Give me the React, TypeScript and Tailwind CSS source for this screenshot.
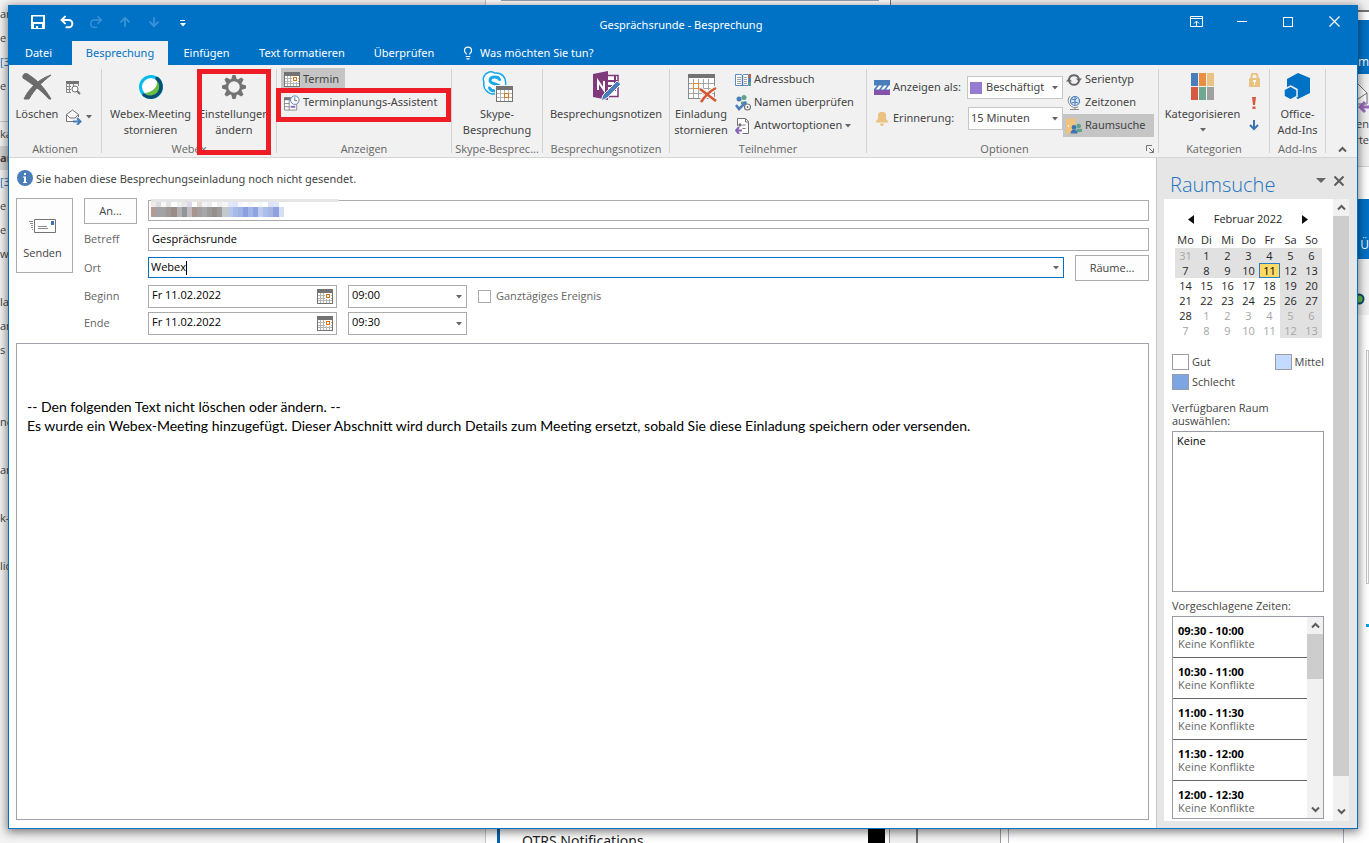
import React, { useState } from 'react';
import { Undo2, Redo2, ArrowUp, ArrowDown, Lightbulb } from 'lucide-react';

// ---------- Icons ----------

const Caret = ({ className = 'text-[#666666]' }: { className?: string }) => (
  <svg width="6" height="4" viewBox="0 0 6 4" className={`pointer-events-none shrink-0 ${className}`} aria-hidden="true">
    <path d="M0 0h6L3 3.5z" fill="currentColor" />
  </svg>
);

const Chevron = ({ up = false }: { up?: boolean }) => (
  <svg width="9" height="7" viewBox="0 0 9 7" aria-hidden="true">
    <path d={up ? 'M1 5.5l3.5-3.5L8 5.5' : 'M1 1.5L4.500 5 8 1.500'} fill="none" stroke="#5c5c5c" strokeWidth="2" />
  </svg>
);

const SaveIcon = () => (
  <svg width="14" height="14" viewBox="0 0 14 14" aria-hidden="true">
    <path d="M0 0h14v14H0zM2 1.500V7h10V1.500zM3 9v4h2v-2h2v2h4V9z" fill="#fff" fillRule="evenodd" />
  </svg>
);

const CalendarIcon = () => (
  <svg width="16" height="15" viewBox="0 0 16 15" shapeRendering="crispEdges" className="shrink-0" aria-hidden="true">
    <path d="M0 0h16v15H0z" fill="#737373" />
    <path d="M1 4h14v10H1z" fill="#fff" />
    <path d="M3.500 4v10M6.500 4v10M9.500 4v10M12.500 4v10M1 6.500h14M1 9.500h14M1 11.500h14" stroke="#b4b4b4" />
    <path d="M8 4h6v6H8z" fill="#fff" />
    <path d="M9 5h4v4H9z" fill="#e0730c" />
    <path d="M10 6h2v2h-2z" fill="#fff" />
  </svg>
);

const DeleteIcon = () => (
  <svg width="32" height="32" viewBox="0 0 32 32" aria-hidden="true">
    <path d="M2 7C1 3 5 1 8 4c8 5 15 12 22 24h-2C20 19 11 13 2 7z" fill="#6b6b6b" stroke="#6b6b6b" />
    <path d="M30 4C21 11 13 19 8 28H3C8 17 18 8 30 4z" fill="#6b6b6b" stroke="#6b6b6b" />
  </svg>
);

const CalendarSearchIcon = () => (
  <svg width="16" height="16" viewBox="0 0 16 16" aria-hidden="true">
    <path d="M1 2h13v3H1z" fill="#737373" />
    <path d="M1.500 4v9.500H6M1 7.500h5M1 10.500h5M4.500 5v8M8.500 5v2M13.500 4v3" fill="none" stroke="#8a8a8a" />
    <circle cx="10" cy="10" r="3" fill="#fff" stroke="#737373" />
    <path d="M12 12l3 3" stroke="#737373" strokeWidth="2" />
  </svg>
);

const ForwardIcon = () => (
  <svg width="17" height="16" viewBox="0 0 17 16" aria-hidden="true">
    <path d="M1.500 5.500L7.500 1l6 4.500V8M1.500 5.500v7H8M1.500 5.500L5 9h5l3.500-3.500" fill="#fff" stroke="#737373" />
    <path d="M8 12.500h7M12 9l3.500 3.500L12 16" fill="none" stroke="#4a7ebb" strokeWidth="2" />
  </svg>
);

const WebexIcon = () => (
  <svg width="26" height="26" viewBox="0 0 26 26" aria-hidden="true">
    <circle cx="13" cy="13" r="9" fill="#fff" />
    <path d="M19 6c1 7-4 12-12 13 3 4 9 4 12 1 4-4 4-10 0-14z" fill="#69bd45" />
    <circle cx="13" cy="13" r="10.500" fill="none" stroke="#07bcea" strokeWidth="3" />
    <path d="M19 4.500A10.500 10.500 0 1 1 6 21" fill="none" stroke="#075071" strokeWidth="3.500" strokeLinecap="round" />
  </svg>
);

const GearIcon = () => (
  <svg width="26" height="26" viewBox="-13 -13 26 26" aria-hidden="true">
    <g fill="#737373">
      {[0, 45, 90, 135, 180, 225, 270, 315].map((angle) => (
        <path key={angle} d="M-3-7L-1.500-12h3L3-7z" transform={`rotate(${angle})`} />
      ))}
    </g>
    <circle r="7" fill="#f1f1f1" stroke="#737373" strokeWidth="2.500" />
  </svg>
);

const AssistantIcon = () => (
  <svg width="17" height="16" viewBox="0 0 17 16" aria-hidden="true">
    <path d="M.500 2.500h13v13H.500z" fill="#fff" stroke="#8a8a8a" />
    <path d="M0 2h7v3H0z" fill="#737373" />
    <path d="M5.500 4v12M0 8.500h6M0 12h6" stroke="#8a8a8a" />
    <path d="M7 11h5v2H7z" fill="#8764b8" />
    <circle cx="11.500" cy="5" r="4.500" fill="#fff" stroke="#4a7ebb" />
    <path d="M11.500 2v3.500H14" fill="none" stroke="#666" />
  </svg>
);

const SkypeIcon = () => (
  <svg width="32" height="32" viewBox="0 0 32 32" aria-hidden="true">
    <path d="M7 1.500c2-1 5-.500 6.500.500C21 1 25.500 7 24.500 13c2 4 2 8-1 10-2 2-6 2-8 0C7 24 1.500 18 3 11c-2-4 .500-8 4-9.500z" fill="#fff" stroke="#16a9ea" strokeWidth="1.500" />
    <path d="M18.500 8.500C17 5 9 5 9 9.500s10 2.500 10 7S10 21 8.500 17" fill="none" stroke="#16a9ea" strokeWidth="3" strokeLinecap="round" />
    <path d="M14 14h18v17H14z" fill="#f1f1f1" />
    <g shapeRendering="crispEdges">
      <path d="M15.500 15.500h16v15h-16z" fill="#fff" stroke="#737373" />
      <path d="M15 15h17v4H15z" fill="#737373" />
      <path d="M19.500 19v11M23.500 19v11M27.500 19v11M16 22.500h15M16 26.500h15" stroke="#b4b4b4" />
      <path d="M23.500 22.500h4v4h-4z" fill="#fff" stroke="#e0730c" />
    </g>
  </svg>
);

const NotesIcon = () => (
  <svg width="32" height="32" viewBox="0 0 32 32" aria-hidden="true">
    <path d="M17 4.500h11v21H17" fill="#fff" stroke="#80397b" strokeWidth="1.500" />
    <path d="M18 10h6M18 15h6M25 5v15M25 10h3M25 15h3" stroke="#80397b" strokeWidth="2" />
    <path d="M3 3l15-3v29L3 26z" fill="#80397b" />
    <path d="M8 19V10l6 9v-9" fill="none" stroke="#fff" strokeWidth="2" />
    <path d="M27 10l4 3-14 14-6 3 2-6z" fill="#4a7ebb" stroke="#f1f1f1" strokeWidth="1" />
  </svg>
);

const CancelInviteIcon = () => (
  <svg width="32" height="32" viewBox="0 0 32 32" aria-hidden="true">
    <g shapeRendering="crispEdges">
      <path d="M3.500 3.500h26v24h-26z" fill="#fff" stroke="#8a8a8a" />
      <path d="M8.500 8v19M13.500 8v19M18.500 8v19M23.500 8v19M4 12.500h25M4 17.500h25M4 22.500h25" stroke="#a5a5a5" />
      <path d="M3 3h27v4H3z" fill="#737373" />
      <path d="M8.500 12.500h5v5h-5z" fill="#fff" stroke="#e8893a" />
    </g>
    <path d="M15 18l16 12M31 17C25 20 20 25 16 31" stroke="#f1f1f1" strokeWidth="5" fill="none" />
    <path d="M15 18l16 12M31 17C25 20 20 25 16 31" stroke="#d65532" strokeWidth="2.500" fill="none" />
  </svg>
);

const AddressBookIcon = () => (
  <svg width="16" height="14" viewBox="0 0 16 14" aria-hidden="true">
    <path d="M.500 1.500h6L7.500 2.500l1-1h5v11H.500z" fill="#fff" stroke="#5b8bc0" />
    <path d="M7.500 2v11" stroke="#4a7ebb" strokeWidth="1.500" />
    <path d="M2 4.500h4M2 6.500h4M2 8.500h4M2 10.500h4M9 4.500h3M9 6.500h3M9 8.500h3M9 10.500h3" stroke="#a0a0a0" />
    <path d="M14 1h2v4h-2z" fill="#d65532" />
    <path d="M14 5h2v4h-2z" fill="#4a7ebb" />
    <path d="M14 9h2v4h-2z" fill="#5fa187" />
  </svg>
);

const CheckNamesIcon = () => (
  <svg width="16" height="16" viewBox="0 0 16 16" aria-hidden="true">
    <circle cx="4" cy="4" r="2.500" fill="#4a7ebb" />
    <circle cx="9" cy="2.500" r="2.500" fill="#5fa187" />
    <path d="M6 9V6.500h5.500V9z" fill="#5fa187" />
    <path d="M1 10l3 4 7-7" fill="none" stroke="#4a7ebb" strokeWidth="2.500" />
    <circle cx="12.500" cy="12" r="3" fill="#fff" stroke="#737373" strokeWidth="1.200" />
    <circle cx="12.500" cy="12" r="1" fill="#737373" />
  </svg>
);

const ResponseIcon = () => (
  <svg width="16" height="16" viewBox="0 0 16 16" aria-hidden="true">
    <path d="M2.500 8V.500h8l3 3v12h-6" fill="#fff" stroke="#737373" />
    <path d="M10.500 1v3h3" fill="none" stroke="#737373" />
    <path d="M4 6h2v2H4zM7.500 7h3M7.500 10.500h3" stroke="#737373" fill="#737373" strokeWidth="1" />
    <path d="M1 12.500h6M4 9l-3 3.500L4 16" fill="none" stroke="#8764b8" strokeWidth="2" />
  </svg>
);

const ShowAsIcon = () => (
  <svg width="16" height="15" viewBox="0 0 16 15" className="shrink-0" aria-hidden="true">
    <path d="M0 0h16v10H0z" fill="#4a7ebb" />
    <path d="M0 5.500h3L0 9zM5 5.500h3L5 9.500H2zM10 5.500h3L10 9.500H7zM15 5.500h1v3l-1 1h-3z" fill="#fff" />
    <path d="M0 10h16v5H0z" fill="#8651a8" />
  </svg>
);

const BellIcon = () => (
  <svg width="14" height="14" viewBox="0 0 14 14" className="shrink-0" aria-hidden="true">
    <path d="M5 0h4l2 2v5l2 2v1.500H1V9l2-2V2zM5 11.500h4L8 14H6z" fill="#eac282" />
  </svg>
);

const RecurrenceIcon = () => (
  <svg width="16" height="14" viewBox="0 0 16 14" aria-hidden="true">
    <path d="M3 6A5.200 5.200 0 0 1 13 6M13 8A5.200 5.200 0 0 1 3 8" fill="none" stroke="#666" strokeWidth="1.800" />
    <path d="M10 5.500h6L13 9zM0 8.500h6L3 5z" fill="#666" />
  </svg>
);

const GlobeIcon = () => (
  <svg width="14" height="16" viewBox="0 0 14 16" aria-hidden="true">
    <circle cx="8" cy="6" r="4.500" fill="#d7e5f5" stroke="#4a7ebb" strokeWidth="1.200" />
    <path d="M5 4l3 1 2-2M5 8l3-1 3 1M8 2v8" stroke="#4a7ebb" fill="none" />
    <path d="M3 1a7 7 0 0 0 8 11M8 12v3M3 14.500h9" fill="none" stroke="#8a8a8a" />
  </svg>
);

const RoomFinderIcon = () => (
  <svg width="17" height="16" viewBox="0 0 17 16" aria-hidden="true">
    <path d="M0 0h10v16H0z" fill="#f0c27b" />
    <path d="M2 7h1v2H2z" fill="#fff" />
    <circle cx="13.500" cy="8" r="2.500" fill="#5fa187" />
    <path d="M11 15v-4h6v3z" fill="#5fa187" />
    <circle cx="8.500" cy="9.500" r="2.500" fill="#3b73b5" />
    <path d="M5 16v-2l2-2h3l2 2v2z" fill="#3b73b5" />
  </svg>
);

const CategorizeIcon = () => (
  <svg width="24" height="28" viewBox="0 0 24 28" aria-hidden="true">
    <path d="M0 0h7v13H0z" fill="#4a7ebb" />
    <path d="M8 0h7v13H8z" fill="#ea8f42" />
    <path d="M16 0h7v13h-7z" fill="#eac282" />
    <path d="M0 14h7v13H0z" fill="#d65a42" />
    <path d="M8 14h7v13H8z" fill="#6fa891" />
    <path d="M16 14h7v13h-7z" fill="#a0a0a0" />
  </svg>
);

const LockIcon = () => (
  <svg width="11" height="14" viewBox="0 0 11 14" aria-hidden="true">
    <path d="M2.500 6V3.500a3 3 0 0 1 6 0V6" fill="none" stroke="#eac282" strokeWidth="2" />
    <path d="M0 5h11v9H0z" fill="#eac282" />
    <path d="M4 7h3v2H6v3H5V9H4z" fill="#fff" />
  </svg>
);

const ImportantIcon = () => (
  <svg width="4" height="12" viewBox="0 0 4 12" aria-hidden="true">
    <path d="M0 0h4L3 8H1zM.500 9.500h3V12h-3z" fill="#d65a42" />
  </svg>
);

const LowIcon = () => (
  <svg width="10" height="11" viewBox="0 0 10 11" aria-hidden="true">
    <path d="M5 0v9M1 5l4 4 4-4" fill="none" stroke="#3b73b5" strokeWidth="2" />
  </svg>
);

const AddInsIcon = () => (
  <svg width="28" height="28" viewBox="0 0 28 28" aria-hidden="true">
    <path d="M14 0l12 5v15l-12 6L3 20V6z" fill="#0072c6" />
    <path d="M6.500 13l6.500 3.500v7L6.500 27 0 23.500v-7z" fill="#0072c6" stroke="#f1f1f1" strokeWidth="1.500" />
  </svg>
);

const InfoIcon = () => (
  <svg width="16" height="16" viewBox="0 0 16 16" aria-hidden="true">
    <circle cx="8" cy="8" r="8" fill="#4a7ebb" />
    <path d="M7 3h2v2H7zM6 6.500h3V12h1v1H6v-1h1V7.500H6z" fill="#fff" />
  </svg>
);

const SendIcon = () => (
  <svg width="28" height="15" viewBox="0 0 28 15" aria-hidden="true">
    <path d="M5.500.500h21v13h-21z" fill="#fff" stroke="#737373" />
    <path d="M22 2h3v4h-3z" fill="#3b73b5" />
    <path d="M9 7.500h9M9 9.500h10M0 2.500h4M1 4.500h3M2 6.500h2M2 8.500h2M3 10.500h1" stroke="#8a8a8a" />
  </svg>
);

// ---------- Data ----------

const tabs = [
  { name: 'Datei', width: 'w-[63px] pr-1' },
  { name: 'Besprechung', width: 'w-24' },
  { name: 'Einfügen', width: 'w-[77px]' },
  { name: 'Text formatieren', width: 'w-[114px]' },
  { name: 'Überprüfen', width: 'w-[90px]' },
];

const weekdays = ['Mo', 'Di', 'Mi', 'Do', 'Fr', 'Sa', 'So'];

const weeks = [
  [31, 1, 2, 3, 4, 5, 6],
  [7, 8, 9, 10, 11, 12, 13],
  [14, 15, 16, 17, 18, 19, 20],
  [21, 22, 23, 24, 25, 26, 27],
  [28, 1, 2, 3, 4, 5, 6],
  [7, 8, 9, 10, 11, 12, 13],
];

const suggestions = ['09:30 - 10:00', '10:30 - 11:00', '11:00 - 11:30', '11:30 - 12:00', '12:00 - 12:30'];

// Colour blocks over the hidden recipient
const maskTop = ['#f3e9e6', '#d9dde2', '#f7f7f7', '#e3e3e3', '#ffffff', '#f0f0f0', '#e8e8e8', '#ddd8ea', '#ffffff', '#e5dcd8', '#f4f4f4', '#ececec', '#ffffff', '#eeeeee', '#f5f5f5', '#e2e8f8', '#dde5fa', '#f5f8ff', '#ffffff', '#f5f8ff', '#ffffff', '#f5f8ff', '#ffffff', '#dde2f8', '#dde5fa', '#ffffff'];
const maskBottom = ['#b59a95', '#8f9496', '#a2a3a2', '#8d8785', '#9b8c88', '#a3a3a5', '#8f979c', '#b7aeb4', '#a8958f', '#938e8e', '#a5a7ab', '#8a8a8a', '#96908d', '#8c8a8b', '#c3c9c8', '#adbce5', '#a6bbe9', '#90a6de', '#8aa0de', '#91a8e4', '#8fa3df', '#b3c2ec', '#a9c0ee', '#98a8df', '#8ea3de', '#ccd9f5'];

// One entry per 24px line of the mail list
const mailFragments = ['ar', 'e', '[3', 'e', '', 'ka', 'ar', '[3', 'e', 'e', 'we', '', 'la', 'ar', 's', '', '', 'ne', '', 'ar', '', 'k-', '', 'lic'];

// ---------- Ribbon parts ----------

const Divider = () => <div className="my-1 w-px shrink-0 bg-[#d2d2d2]" />;

const Group = ({ label, width, labelClass = '', children }: { label: string; width: string; labelClass?: string; children: React.ReactNode }) => (
  <section aria-label={label} className={`relative flex shrink-0 flex-col ${width}`}>
    <div className="flex flex-1">{children}</div>
    <div className={`h-4 text-center font-['Open_Sans',sans-serif] leading-4 whitespace-nowrap text-[#666666] ${labelClass}`}>{label}</div>
  </section>
);

const BigButton = ({ icon, width, children }: { icon: React.ReactNode; width: string; children: React.ReactNode }) => (
  <button className={`flex shrink-0 flex-col items-center pt-1.5 leading-4 whitespace-nowrap ${width}`}>
    <span className="mb-[3px] flex h-8 items-center justify-center">{icon}</span>
    {children}
  </button>
);

const SmallButton = ({ icon, active = false, children }: { icon: React.ReactNode; active?: boolean; children: React.ReactNode }) => (
  <button className={`flex h-[23px] items-center gap-[3px] pr-1.5 pl-[3px] whitespace-nowrap ${active ? 'bg-[#c5c5c5]' : ''}`}>
    <span className="flex w-4 shrink-0 justify-center">{icon}</span>
    {children}
  </button>
);

const Ribbon = () => (
  <div className="flex h-[93px] shrink-0 overflow-hidden border-b border-[#d5d5d5] bg-[#f1f1f1] font-['Noto_Sans',sans-serif] text-[11px] text-[#444444]">
    <Group label="Aktionen" width="w-[92px]">
      <BigButton icon={<DeleteIcon />} width="w-14">
        <span>Löschen</span>
      </BigButton>
      <div className="flex flex-col gap-3.5 pt-3.5">
        <button aria-label="Kalender durchsuchen"><CalendarSearchIcon /></button>
        <button aria-label="Weiterleiten" className="flex items-center gap-1"><ForwardIcon /><Caret /></button>
      </div>
    </Group>
    <Divider />
    <Group label="Webex" width="w-[174px]">
      <BigButton icon={<WebexIcon />} width="w-[97px]">
        <span>Webex-Meeting</span>
        <span>stornieren</span>
      </BigButton>
      <BigButton icon={<GearIcon />} width="w-[70px]">
        <span>Einstellungen</span>
        <span>ändern</span>
      </BigButton>
      <div className="pointer-events-none absolute top-1 right-[5px] h-[86px] w-[74px] border-5 border-[#ee1c25]" />
    </Group>
    <Divider />
    <Group label="Anzeigen" width="w-[174px]">
      <div className="flex flex-col items-start pt-[3px] pl-1">
        <SmallButton active icon={<CalendarIcon />}>Termin</SmallButton>
        <SmallButton icon={<AssistantIcon />}>Terminplanungs-Assistent</SmallButton>
      </div>
      <div className="pointer-events-none absolute top-[23px] right-0 -left-px h-[34px] border-5 border-[#ee1c25]" />
    </Group>
    <Divider />
    <Group label="Skype-Besprec..." width="w-[90px]">
      <BigButton icon={<SkypeIcon />} width="w-full">
        <span>Skype-</span>
        <span>Besprechung</span>
      </BigButton>
    </Group>
    <Divider />
    <Group label="Besprechungsnotizen" width="w-[126px]">
      <BigButton icon={<NotesIcon />} width="w-full">
        <span>Besprechungsnotizen</span>
      </BigButton>
    </Group>
    <Divider />
    <Group label="Teilnehmer" width="w-[196px]">
      <BigButton icon={<CancelInviteIcon />} width="w-[62px]">
        <span>Einladung</span>
        <span>stornieren</span>
      </BigButton>
      <div className="flex flex-col items-start pt-[3px]">
        <SmallButton icon={<AddressBookIcon />}>Adressbuch</SmallButton>
        <SmallButton icon={<CheckNamesIcon />}>Namen überprüfen</SmallButton>
        <SmallButton icon={<ResponseIcon />}>Antwortoptionen <Caret /></SmallButton>
      </div>
    </Group>
    <Divider />
    <Group label="Optionen" width="w-[291px]" labelClass="pr-4">
      <div className="flex w-[196px] flex-col gap-2 pt-[11px] pl-[7px]">
        <div className="flex h-[23px] items-center">
          <label htmlFor="showAs" className="flex flex-1 items-center gap-[3px] whitespace-nowrap"><ShowAsIcon />Anzeigen als:</label>
          <div className="relative flex h-full w-24 items-center border border-[#c6c6c6] bg-white">
            <span className="ml-0.5 h-3 w-3 shrink-0 bg-[#967bd2]" />
            <select id="showAs" className="min-w-0 flex-1 appearance-none pl-1 outline-none">
              <option>Beschäftigt</option>
              <option>Frei</option>
            </select>
            <span className="pointer-events-none absolute right-1"><Caret /></span>
          </div>
        </div>
        <div className="flex h-[23px] items-center">
          <label htmlFor="reminder" className="flex flex-1 items-center gap-1 pl-px whitespace-nowrap"><BellIcon />Erinnerung:</label>
          <div className="relative flex h-full w-[95px] items-center border border-[#c6c6c6] bg-white">
            <select id="reminder" className="min-w-0 flex-1 appearance-none pl-0.5 outline-none">
              <option>15 Minuten</option>
              <option>30 Minuten</option>
            </select>
            <span className="pointer-events-none absolute right-1"><Caret /></span>
          </div>
        </div>
      </div>
      <div className="flex w-[91px] flex-col pt-[3px]">
        <SmallButton icon={<RecurrenceIcon />}>Serientyp</SmallButton>
        <SmallButton icon={<GlobeIcon />}>Zeitzonen</SmallButton>
        <SmallButton active icon={<RoomFinderIcon />}>Raumsuche</SmallButton>
      </div>
      <button aria-label="Weitere Optionen" className="absolute right-1 bottom-1">
        <svg width="8" height="8" viewBox="0 0 8 8" aria-hidden="true">
          <path d="M.500 6V.500H6M3 3l4 4M7.500 3.500v4h-4" fill="none" stroke="#737373" />
        </svg>
      </button>
    </Group>
    <Divider />
    <Group label="Kategorien" width="w-[110px]">
      <BigButton icon={<CategorizeIcon />} width="w-[87px]">
        <span>Kategorisieren</span>
        <span className="flex h-4 items-center"><Caret /></span>
      </BigButton>
      <div className="flex w-4 flex-col items-center pt-[3px]">
        <button aria-label="Privat" className="flex h-[23px] items-center"><LockIcon /></button>
        <button aria-label="Wichtigkeit: hoch" className="flex h-[23px] items-center"><ImportantIcon /></button>
        <button aria-label="Wichtigkeit: niedrig" className="flex h-[23px] items-center"><LowIcon /></button>
      </div>
    </Group>
    <Divider />
    <Group label="Add-Ins" width="w-[55px]">
      <BigButton icon={<AddInsIcon />} width="w-full">
        <span>Office-</span>
        <span>Add-Ins</span>
      </BigButton>
    </Group>
    <Divider />
    <button aria-label="Menüband reduzieren" className="ml-auto self-end pr-2.5 pb-1"><Chevron up /></button>
  </div>
);

// ---------- Title bar ----------

const TitleBar = () => {
  const [activeTab, setActiveTab] = useState('Besprechung');
  return (
    <header className="shrink-0 bg-[#0072c6] font-['Noto_Sans',sans-serif] text-[11px] text-white">
      <div className="grid h-[35px] grid-cols-[1fr_auto_1fr]">
        <div className="flex h-[31px] items-center pl-3.5">
          <button aria-label="Speichern" className="flex w-[29px] justify-center"><SaveIcon /></button>
          <button aria-label="Rückgängig" className="flex w-[29px] justify-center"><Undo2 size={16} strokeWidth={3} /></button>
          <button aria-label="Wiederholen" className="flex w-[29px] justify-center text-[#3d94d6]"><Redo2 size={16} strokeWidth={2} /></button>
          <button aria-label="Vorheriges Element" className="flex w-[29px] justify-center text-[#3d94d6]"><ArrowUp size={14} strokeWidth={3} /></button>
          <button aria-label="Nächstes Element" className="flex w-[29px] justify-center text-[#3d94d6]"><ArrowDown size={14} strokeWidth={3} /></button>
          <button aria-label="Symbolleiste anpassen" className="flex w-[29px] flex-col items-center gap-0.5 pt-1">
            <span className="h-px w-[5px] bg-white" />
            <Caret className="text-white" />
          </button>
        </div>
        <h1 className="self-center pt-1 pr-1">Gesprächsrunde - Besprechung</h1>
        <div className="flex h-[31px] items-center justify-end">
          <button aria-label="Menüband-Anzeigeoptionen" className="flex w-[46px] justify-center">
            <svg width="13" height="11" viewBox="0 0 13 11" aria-hidden="true">
              <path d="M.500.500h12v10H.500zM0 2.500h13M6.500 10V5M4 7.500L6.500 5 9 7.500" fill="none" stroke="#fff" />
            </svg>
          </button>
          <button aria-label="Minimieren" className="flex w-[46px] justify-center"><span className="h-px w-2.5 bg-white" /></button>
          <button aria-label="Maximieren" className="flex w-[46px] justify-center"><span className="h-2.5 w-2.5 border border-white" /></button>
          <button aria-label="Schließen" className="flex w-[46px] justify-center">
            <svg width="11" height="11" viewBox="0 0 11 11" aria-hidden="true">
              <path d="M.500.500l10 10M10.500.500l-10 10" stroke="#fff" strokeWidth="1.200" />
            </svg>
          </button>
        </div>
      </div>
      <nav className="flex h-6">
        {tabs.map((tab) => (
          <button
            key={tab.name}
            onClick={() => setActiveTab(tab.name)}
            className={`text-center whitespace-nowrap ${tab.width} ${activeTab === tab.name ? 'bg-[#f1f1f1] text-[#0072c6]' : ''}`}
          >
            {tab.name}
          </button>
        ))}
        <button className="flex items-center gap-[5px] pl-3">
          <Lightbulb size={14} strokeWidth={2} />
          Was möchten Sie tun?
        </button>
      </nav>
    </header>
  );
};

// ---------- Form ----------

const TimeRow = ({ label, id, time, children }: { label: string; id: string; time: string; children?: React.ReactNode }) => (
  <div className="flex h-[23px] items-center">
    <label htmlFor={id} className="w-16 shrink-0">{label}</label>
    <div className="flex h-full w-[189px] items-center border border-[#ababab] bg-white pr-[3px]">
      <input id={id} defaultValue="Fr 11.02.2022" className="min-w-0 flex-1 pb-0.5 pl-[3px] text-black outline-none" />
      <button aria-label={`${label}: Datum wählen`}><CalendarIcon /></button>
    </div>
    <div className="relative ml-[11px] flex h-full w-[119px] items-center border border-[#ababab] bg-white">
      <select aria-label={`${label}: Uhrzeit`} className="h-full w-full appearance-none pb-0.5 pl-[3px] text-black outline-none">
        <option>{time}</option>
      </select>
      <span className="pointer-events-none absolute right-1"><Caret /></span>
    </div>
    {children}
  </div>
);

const MeetingForm = () => (
  <main className="flex min-w-0 flex-1 flex-col px-[7px] pb-2 text-[11px] text-[#666666]">
    <div className="flex h-10 shrink-0 items-center gap-[3px] pl-px text-[#444444]">
      <InfoIcon />
      <span className="pt-0.5 font-['Noto_Sans',sans-serif]">Sie haben diese Besprechungseinladung noch nicht gesendet.</span>
    </div>
    <div className="flex shrink-0 items-start gap-[11px]">
      <button className="flex h-[75px] w-[57px] flex-col items-center justify-end gap-[11px] border border-[#ababab] bg-[#fdfdfd] pr-1 pb-[11px] text-[#444444]">
        <SendIcon />
        <span className="leading-4">Senden</span>
      </button>
      <div className="flex min-w-0 flex-1 flex-col gap-1">
        <div className="flex h-[26px] items-center">
          <button className="mr-[11px] h-full w-[53px] shrink-0 border border-[#ababab] bg-[#fdfdfd] text-[#444444]">An...</button>
          <div className="relative mb-px h-[21px] flex-1">
            <input aria-label="An" className="h-full w-full border border-[#ababab] bg-white px-[3px] text-black outline-none" />
            <svg width="190" height="19" viewBox="0 0 190 19" shapeRendering="crispEdges" className="pointer-events-none absolute -top-px left-[3px]" aria-hidden="true">
              <path d="M0 0h188v3H0z" fill="#e5e5e5" />
              {maskTop.map((color, i) => (
                <rect key={i} x={i * 5.1} y="3" width="5.200" height="5" fill={color} />
              ))}
              {maskBottom.map((color, i) => (
                <rect key={i} x={i * 5.1} y="8" width="5.200" height="10" fill={color} opacity={i % 2 ? 0.85 : 1} />
              ))}
            </svg>
          </div>
        </div>
        <div className="flex h-[23px] items-center">
          <label htmlFor="subject" className="w-16 shrink-0">Betreff</label>
          <input id="subject" defaultValue="Gesprächsrunde" className="h-full min-w-0 flex-1 border border-[#ababab] bg-white px-[3px] pb-0.5 text-black outline-none" />
        </div>
        <div className="flex h-[26px] items-center">
          <label htmlFor="location" className="w-16 shrink-0">Ort</label>
          <div className="mb-px flex h-[21px] min-w-0 flex-1 items-center border border-[#0072c6] bg-white pr-1">
            <span className="flex min-w-0 flex-1 items-center">
              <input id="location" defaultValue="Webex" size={1} className="w-[37px] pl-0.5 text-black outline-none" />
              <span className="h-3.5 w-px bg-black" />
            </span>
            <button aria-label="Orte anzeigen"><Caret /></button>
          </div>
          <button className="ml-[11px] h-full w-[74px] shrink-0 border border-[#ababab] bg-[#fdfdfd] text-[#444444]">Räume...</button>
        </div>
        <TimeRow label="Beginn" id="start" time="09:00">
          <label className="ml-[11px] flex items-center gap-[5px]">
            <input type="checkbox" className="h-[13px] w-[13px] appearance-none border border-[#ababab] bg-white" />
            Ganztägiges Ereignis
          </label>
        </TimeRow>
        <TimeRow label="Ende" id="end" time="09:30" />
      </div>
    </div>
    <article className="mt-2 flex-1 border border-[#a0a3ad] px-2.5 pt-[53px] font-['Lato',sans-serif] text-sm leading-[19px] text-black">
      <p>-- Den folgenden Text nicht löschen oder ändern. --</p>
      <p>Es wurde ein Webex-Meeting hinzugefügt. Dieser Abschnitt wird durch Details zum Meeting ersetzt, sobald Sie diese Einladung speichern oder versenden.</p>
    </article>
  </main>
);

// ---------- Room finder ----------

const dayClass = (week: number, day: number) => {
  if (week === 1 && day === 4) return 'bg-[#ffd966] text-black outline outline-1 -outline-offset-1 outline-[#2b7cc4]';
  const muted = (week === 0 && day === 0) || (week === 4 && day > 0) || week === 5;
  const shaded = week < 2 || day > 4;
  return `${muted ? 'text-[#a6a6a6]' : 'text-[#262626]'} ${shaded ? 'bg-[#e1e1e1]' : ''}`;
};

const Swatch = ({ color, children }: { color: string; children: React.ReactNode }) => (
  <span className="flex items-center gap-[3px]">
    <span className={`h-4 w-[17px] border border-[#9a9da5] ${color}`} />
    {children}
  </span>
);

const RoomFinder = () => (
  <aside className="flex w-[201px] shrink-0 flex-col border-l border-[#c6c6c6] bg-[#e6e6e6] pr-2 pb-[7px] pl-[7px] text-[11px] text-[#444444]">
    <div className="flex h-[41px] shrink-0 items-center justify-between pt-3 pr-[5px] pl-1.5">
      <h2 className="text-xl leading-7 font-light text-[#2072c0]">Raumsuche</h2>
      <div className="flex items-center gap-2 pb-2">
        <button aria-label="Aufgabenbereichsoptionen">
          <svg width="10" height="5" viewBox="0 0 10 5" aria-hidden="true"><path d="M0 0h10L5 5z" fill="#666" /></svg>
        </button>
        <button aria-label="Raumsuche schließen">
          <svg width="10" height="10" viewBox="0 0 10 10" aria-hidden="true"><path d="M.500.500l9 9M9.500.500l-9 9" stroke="#5c5c5c" strokeWidth="2" /></svg>
        </button>
      </div>
    </div>
    <div className="flex min-h-0 flex-1 bg-white">
      <div className="flex min-w-0 flex-1 flex-col pr-[9px] pb-0.5 pl-2">
        <div className="flex h-[33px] items-center justify-between pt-2 pr-4 pl-4 text-[#262626]">
          <button aria-label="Vorheriger Monat">
            <svg width="6" height="9" viewBox="0 0 6 9" aria-hidden="true"><path d="M6 0v9L0 4.500z" fill="#111" /></svg>
          </button>
          Februar 2022
          <button aria-label="Nächster Monat">
            <svg width="6" height="9" viewBox="0 0 6 9" aria-hidden="true"><path d="M0 0v9l6-4.500z" fill="#111" /></svg>
          </button>
        </div>
        <table className="ml-[3px] w-[147px] table-fixed border-collapse text-center text-[#262626]">
          <thead>
            <tr className="h-4 leading-4">
              {weekdays.map((name) => <th key={name} className="p-0 font-normal">{name}</th>)}
            </tr>
          </thead>
          <tbody>
            {weeks.map((days, week) => (
              <tr key={week} className="h-[15px] leading-[15px]">
                {days.map((date, day) => <td key={day} className={`p-0 ${dayClass(week, day)}`}>{date}</td>)}
              </tr>
            ))}
          </tbody>
        </table>
        <div className="mt-4 flex justify-between leading-4">
          <Swatch color="bg-white">Gut</Swatch>
          <Swatch color="bg-[#c2dbff]">Mittel</Swatch>
        </div>
        <div className="mt-1 flex leading-4">
          <Swatch color="bg-[#7ba6e3]">Schlecht</Swatch>
        </div>
        <h3 className="mt-[11px] leading-[13px]">Verfügbaren Raum<br />auswählen:</h3>
        <ul className="mt-1 min-h-0 flex-1 border border-[#9a9da5] bg-white px-1 leading-[18px] text-black">
          <li>Keine</li>
        </ul>
        <h3 className="mt-1.5 leading-4">Vorgeschlagene Zeiten:</h3>
        <div className="mt-0.5 flex h-[203px] shrink-0 border border-[#9a9da5]">
          <ul className="flex-1 overflow-hidden">
            {suggestions.map((slot) => (
              <li key={slot} className="h-[41px] border-b border-[#666666] pt-[7px] pl-[5px] leading-[13px] whitespace-nowrap text-[#666666]">
                <b className="block text-black">{slot}</b>
                Keine Konflikte
              </li>
            ))}
          </ul>
          <div className="flex w-4 flex-col items-center bg-[#f1f1f1]">
            <span className="flex h-[17px] items-center"><Chevron up /></span>
            <span className="h-[45px] w-full bg-[#cdcdcd]" />
            <span className="mt-auto flex h-[17px] items-center"><Chevron /></span>
          </div>
        </div>
      </div>
      <div className="flex w-4 flex-col items-center bg-[#f1f1f1]">
        <span className="flex h-[17px] shrink-0 items-center"><Chevron up /></span>
        <span className="w-full flex-1 bg-[#cdcdcd]" />
        <span className="flex h-[45px] shrink-0 items-end pb-1.5"><Chevron /></span>
      </div>
    </div>
  </aside>
);

// ---------- Windows that lie behind ----------

const Backdrop = () => (
  <div className="absolute inset-0 overflow-hidden bg-white text-xs text-[#444444]" aria-hidden="true">
    <div className="absolute inset-y-0 left-0 w-[486px] border-r border-[#c6c6c6] bg-[#f3f3f3]">
      <div className="w-4 pt-0.5 text-[11px] whitespace-nowrap">
        {mailFragments.map((text, i) => (
          <div key={i} className={`h-6 leading-6 ${i === 6 ? 'bg-[#d5d5d5] font-bold' : ''} ${text === '[3' ? 'text-[#2072c0]' : ''} ${i === 4 ? 'border-b border-[#c6c6c6]' : ''}`}>
            {text}
          </div>
        ))}
      </div>
    </div>
    <div className="absolute top-0 left-[501px] h-px w-[378px] bg-[#9a9fae]" />
    <div className="absolute bottom-0 left-[497px] flex h-4 w-[393px] items-start justify-between border-r border-l-3 border-r-[#999999] border-l-[#0063b1] pr-1">
      <span className="pt-1 pl-[22px] font-['Noto_Sans',sans-serif] text-sm text-[#222222]">OTRS Notifications</span>
      <span className="h-4 w-[17px] bg-black" />
    </div>
    <div className="absolute bottom-0 left-[890px] h-4 w-7 border-r-2 border-[#737373] bg-[#f1f1f1]" />
    <div className="absolute bottom-0 left-[918px] h-4 w-[83px] border-r border-[#9a9a9a] bg-[#f3f3f3]" />
    <div className="absolute bottom-0 left-[1008px] h-4 w-[336px] border-x border-[#a8abb8]" />
    <div className="absolute top-0 right-0 left-[890px] h-3 border-b-2 border-l border-[#737373] bg-[#f0f0f0]" />
    <div className="absolute inset-y-0 right-0 w-4 overflow-hidden pt-5">
      <div className="h-[54px] bg-[#0072c6] pt-[34px] text-right text-white">m</div>
      <div className="flex h-[93px] flex-col items-end border-b border-[#d5d5d5] bg-[#f1f1f1] pt-2.5 text-[11px]">
        <svg width="11" height="32" viewBox="0 0 11 32">
          <path d="M0 0l9 9v11H0M0 15l9-6" fill="#fff" stroke="#737373" />
          <path d="M11 23H2M7 18l-5 5 5 5" fill="none" stroke="#9a6cc0" strokeWidth="3" />
        </svg>
        <span className="leading-4">en</span>
        <span className="leading-4">rte</span>
      </div>
      <div className="mt-8 h-[60px] bg-[#0072c6] pt-[38px] text-right text-white">Ü</div>
      <div className="flex h-14 items-end bg-[#f1f1f1] pb-2.5 pl-1">
        <svg width="12" height="12" viewBox="0 0 12 12"><circle cx="2" cy="6" r="4.500" fill="#69bd45" stroke="#075071" strokeWidth="2" /></svg>
      </div>
      <div className="mt-[35px] ml-[13px] h-[234px] border border-[#c6c6c6]" />
      <div className="mt-10 ml-[13px] h-[3px] bg-[#00a2ed]" />
    </div>
  </div>
);

const App: React.FC = () => (
  <div className="relative flex h-screen min-h-[760px] min-w-[1240px] pt-[5px] pr-[11px] pb-3.5 pl-2 font-['Open_Sans','Noto_Sans',sans-serif]">
    <Backdrop />
    <div className="relative flex min-w-0 flex-1 flex-col border border-[#0072c6] bg-white shadow-[0_2px_9px_1px_rgba(0,0,0,0.5)]">
      <TitleBar />
      <Ribbon />
      <div className="flex min-h-0 flex-1">
        <MeetingForm />
        <RoomFinder />
      </div>
    </div>
  </div>
);

export default App;
